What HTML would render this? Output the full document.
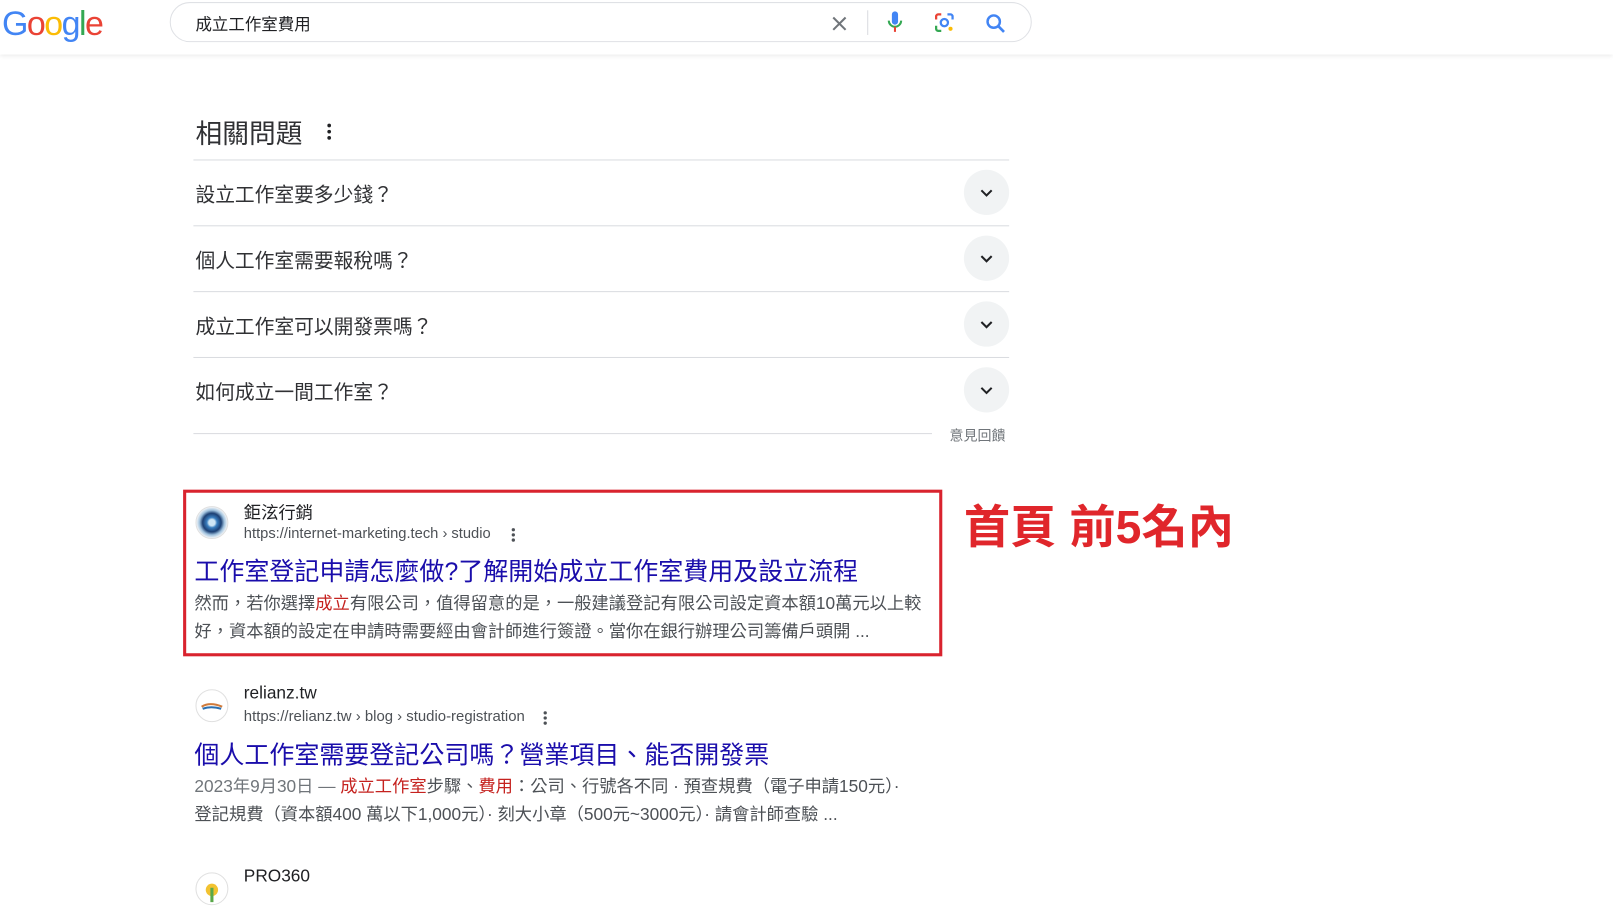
<!DOCTYPE html>
<html><head><meta charset="utf-8"><style>
html,body{margin:0;padding:0;width:1613px;height:895px;overflow:hidden;background:#fff}
#w{position:absolute;left:0;top:0;width:1568px;height:870px;transform:scale(1.0287);transform-origin:0 0;font-family:"Liberation Sans","Noto Sans CJK TC",sans-serif;color:#202124}
.a{position:absolute;white-space:nowrap}
.hdr{position:absolute;left:0;top:0;width:1568px;height:53px;background:#fff;box-shadow:0 2px 4px rgba(0,0,0,.08)}
.sb{position:absolute;left:165px;top:2px;width:838px;height:39px;border:1px solid #dfe1e5;border-radius:21px;box-sizing:border-box}
.ln{position:absolute;left:188px;height:1px;background:#dadce0}
.q{position:absolute;left:190px;font-size:19.2px;color:#303134;white-space:nowrap}
.cv{position:absolute;left:937px;width:44px;height:44px;border-radius:50%;background:#f1f3f4}
.cv svg{position:absolute;left:12px;top:12px}
.t{font-size:24.3px;color:#1a0dab}
.s{font-size:16.8px;color:#4d5156}
.r{color:#c5221f}
.nm{font-size:16px;color:#202124}
.u{font-size:14px;color:#4d5156}
.fv{position:absolute;width:32px;height:32px;border-radius:50%;border:1px solid #e0e0e0;box-sizing:border-box;background:#f8f9fa}
</style></head><body><div id="w">
<div class="hdr"></div>
<div class="a" style="left:2px;top:4px;font-size:33px;letter-spacing:-1.5px;font-family:'Liberation Sans',sans-serif"><span style="color:#4285f4">G</span><span style="color:#ea4335">o</span><span style="color:#fbbc05">o</span><span style="color:#4285f4">g</span><span style="color:#34a853">l</span><span style="color:#ea4335">e</span></div>
<div class="sb"></div>
<div class="a" style="left:190px;top:10px;font-size:16px">成立工作室費用</div>
<svg class="a" style="left:807px;top:14px" width="18" height="18" viewBox="0 0 18 18"><path d="M3 3L15 15M15 3L3 15" stroke="#70757a" stroke-width="2"/></svg>
<div class="a" style="left:843px;top:10px;width:1px;height:24px;background:#dadce0"></div>
<svg class="a" style="left:861px;top:10px" width="18" height="24" viewBox="0 0 18 24"><rect x="6" y="1" width="6" height="13" rx="3" fill="#4285f4"/><path d="M3 10a6 6 0 0 0 12 0" stroke="#34a853" stroke-width="2" fill="none"/><path d="M9 16v5" stroke="#ea4335" stroke-width="2"/></svg>
<svg class="a" style="left:908px;top:12px" width="20" height="20" viewBox="0 0 20 20"><path d="M2 7V4a2 2 0 0 1 2-2h3" stroke="#ea4335" stroke-width="2.2" fill="none"/><path d="M13 2h3a2 2 0 0 1 2 2v3" stroke="#4285f4" stroke-width="2.2" fill="none"/><path d="M2 13v3a2 2 0 0 0 2 2h3" stroke="#34a853" stroke-width="2.2" fill="none"/><circle cx="10" cy="10" r="3.5" fill="none" stroke="#4285f4" stroke-width="2.2"/><circle cx="16" cy="16" r="2" fill="#fbbc05"/></svg>
<svg class="a" style="left:958px;top:13px" width="20" height="20" viewBox="0 0 20 20"><circle cx="8" cy="8" r="6" stroke="#4285f4" stroke-width="2.4" fill="none"/><path d="M12.5 12.5L18 18" stroke="#4285f4" stroke-width="2.6"/></svg>

<div class="a" style="left:190px;top:110px;font-size:26px;color:#303134">相關問題</div>
<svg class="a" style="left:316px;top:119px" width="8" height="18"><circle cx="4" cy="3" r="1.8" fill="#202124"/><circle cx="4" cy="9" r="1.8" fill="#202124"/><circle cx="4" cy="15" r="1.8" fill="#202124"/></svg>
<div class="ln" style="top:155px;width:793px"></div>
<div class="q" style="top:174px">設立工作室要多少錢？</div>
<div class="cv" style="top:165px"><svg width="20" height="20"><path d="M5 8l5 5 5-5" stroke="#202124" stroke-width="2" fill="none"/></svg></div>
<div class="ln" style="top:219px;width:793px"></div>
<div class="q" style="top:238px">個人工作室需要報稅嗎？</div>
<div class="cv" style="top:229px"><svg width="20" height="20"><path d="M5 8l5 5 5-5" stroke="#202124" stroke-width="2" fill="none"/></svg></div>
<div class="ln" style="top:283px;width:793px"></div>
<div class="q" style="top:302px">成立工作室可以開發票嗎？</div>
<div class="cv" style="top:293px"><svg width="20" height="20"><path d="M5 8l5 5 5-5" stroke="#202124" stroke-width="2" fill="none"/></svg></div>
<div class="ln" style="top:347px;width:793px"></div>
<div class="q" style="top:366px">如何成立一間工作室？</div>
<div class="cv" style="top:357px"><svg width="20" height="20"><path d="M5 8l5 5 5-5" stroke="#202124" stroke-width="2" fill="none"/></svg></div>
<div class="ln" style="top:421px;width:718px"></div>
<div class="a" style="left:923px;top:412px;font-size:13.6px;color:#70757a">意見回饋</div>

<div class="a" style="left:178px;top:476px;width:738px;height:162px;border:3px solid #d9232e;box-sizing:border-box"></div>
<div class="fv" style="left:190px;top:492px;background:radial-gradient(circle at 50% 50%,#cfe6f5 0 3px,#3a7fc0 5px,#1c3f73 9px,#9fc1dd 12px,#f0f4f8 15px)"></div>
<div class="a nm" style="left:237px;top:485px;font-size:16.8px">鉅泫行銷</div>
<div class="a u" style="left:237px;top:511px;font-size:14.3px">https://internet-marketing.tech › studio</div>
<svg class="a" style="left:496px;top:512px" width="6" height="16"><circle cx="3" cy="3" r="1.6" fill="#4d5156"/><circle cx="3" cy="8" r="1.6" fill="#4d5156"/><circle cx="3" cy="13" r="1.6" fill="#4d5156"/></svg>
<div class="a t" style="left:189px;top:536px">工作室登記申請怎麼做?了解開始成立工作室費用及設立流程</div>
<div class="a s" style="left:189px;top:573px">然而，若你選擇<span class="r">成立</span>有限公司，值得留意的是，一般建議登記有限公司設定資本額10萬元以上較</div>
<div class="a s" style="left:189px;top:600px">好，資本額的設定在申請時需要經由會計師進行簽證。當你在銀行辦理公司籌備戶頭開 ...</div>

<div class="a" style="left:937px;top:476px;font-size:45px;font-weight:bold;color:#e0262b;text-shadow:0 0 4px #fff,0 0 4px #fff">首頁 前5名內</div>

<div class="fv" style="left:190px;top:670px;background:#fff"><svg width="30" height="30"><path d="M5 16q8-5 20 0" stroke="#d07a3a" stroke-width="2" fill="none"/><path d="M6 18q8-3 18 0" stroke="#2a6fb0" stroke-width="2" fill="none"/></svg></div>
<div class="a nm" style="left:237px;top:664px;font-size:16.8px">relianz.tw</div>
<div class="a u" style="left:237px;top:689px;font-size:14.5px">https://relianz.tw › blog › studio-registration</div>
<svg class="a" style="left:527px;top:690px" width="6" height="16"><circle cx="3" cy="3" r="1.6" fill="#4d5156"/><circle cx="3" cy="8" r="1.6" fill="#4d5156"/><circle cx="3" cy="13" r="1.6" fill="#4d5156"/></svg>
<div class="a t" style="left:189px;top:714px">個人工作室需要登記公司嗎？營業項目、能否開發票</div>
<div class="a s" style="left:189px;top:751px;color:#70757a">2023年9月30日 — <span class="r">成立工作室</span><span style="color:#4d5156">步驟、</span><span class="r">費用</span><span style="color:#4d5156">：公司、行號各不同 · 預查規費（電子申請150元）·</span></div>
<div class="a s" style="left:189px;top:778px">登記規費（資本額400 萬以下1,000元）· 刻大小章（500元~3000元）· 請會計師查驗 ...</div>

<div class="fv" style="left:190px;top:848px;background:#fff"><svg width="30" height="30"><circle cx="15" cy="16" r="6" fill="#f2c230"/><path d="M15 14v14" stroke="#5aa84a" stroke-width="3"/></svg></div>
<div class="a nm" style="left:237px;top:842px;font-size:16.8px">PRO360</div>
</div></body></html>
